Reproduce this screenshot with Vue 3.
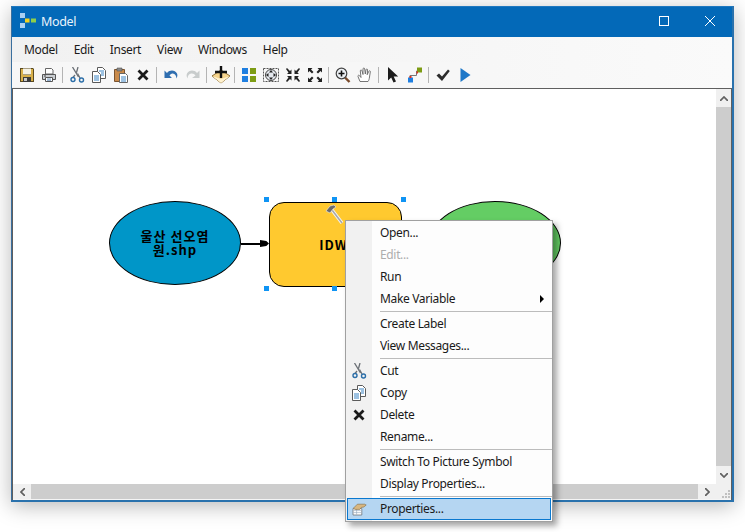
<script setup>
const menus = ['Model', 'Edit', 'Insert', 'View', 'Windows', 'Help']
const toolbar = [
  ['save', 'print'],
  ['cut', 'copy', 'paste', 'del'],
  ['undo', 'redo'],
  ['add'],
  ['grid', 'extent', 'zin', 'zout'],
  ['mag', 'hand'],
  ['pointer', 'connect'],
  ['check', 'run']
]
const contextMenu = [
  [{ t: 'Open...' }, { t: 'Edit...', off: true }, { t: 'Run' }, { t: 'Make Variable', sub: true }],
  [{ t: 'Create Label' }, { t: 'View Messages...' }],
  [{ t: 'Cut', i: 'cut' }, { t: 'Copy', i: 'copy' }, { t: 'Delete', i: 'del' }, { t: 'Rename...' }],
  [{ t: 'Switch To Picture Symbol' }, { t: 'Display Properties...' }],
  [{ t: 'Properties...', i: 'props', on: true }]
]
const handles = [
  [251, 108], [319, 108], [388, 108], [251, 197], [319, 197]
]
</script>

<template>
  <div class="page">
    <svg class="defs" width="0" height="0">
      <symbol id="save" viewBox="0 0 16 16"><path d="M1 1h13l1 1v13H1z" fill="#5a4a20"/><path d="M4 1.5h8v6H4z" fill="#f4f1e4"/><path d="M3 2h1v6h8V2h2v12H2V2z" fill="#d8b04a"/><path d="M4 10h8v5H4z" fill="#3b3b3b"/><path d="M5 11h3v3H5z" fill="#c9c9c9"/></symbol>
      <symbol id="print" viewBox="0 0 16 16"><path d="M4.500 1.500h6l1.500 1.500v4H4.500z" fill="#fff" stroke="#666"/><path d="M1.500 7.500h13v5h-13z" fill="#c9cdd1" stroke="#555"/><path d="M4.500 10.500h7v4h-7z" fill="#fff" stroke="#555"/><path d="M6 12h4M6 13.300h4" stroke="#7a9cc0"/><path d="M3 9h2" stroke="#444"/></symbol>
      <symbol id="cut" viewBox="0 0 16 16"><path d="M3.500 0l6 10M9 0L7.500 5.500M6 8l-2 2.500" stroke="#6a6f75" stroke-width="1.300" fill="none"/><path d="M8.500 6.500L11 11" stroke="#6a6f75" stroke-width="1.300"/><circle cx="4" cy="12.500" r="2" fill="none" stroke="#2b6ea8" stroke-width="1.400"/><circle cx="12.500" cy="13" r="2" fill="none" stroke="#2b6ea8" stroke-width="1.400"/></symbol>
      <symbol id="copy" viewBox="0 0 16 16"><path d="M6.500.5h5l3 3v8h-8z" fill="#fff" stroke="#5a5a5a"/><path d="M1.500 4.500h5l3 3v8h-8z" fill="#fff" stroke="#5a5a5a"/><path d="M3 9h5M3 11h5M3 13h5M8 4h5M10 6h3M10 8h3" stroke="#3a84c4"/></symbol>
      <symbol id="paste" viewBox="0 0 16 16"><path d="M1.500 2.500h10v12h-10z" fill="#c98a4a" stroke="#7a5430"/><path d="M4 1h5v3H4z" fill="#8a8a8a" stroke="#555" stroke-width=".6"/><path d="M6.500 6.500h6l2 2v7h-8z" fill="#fff" stroke="#666"/><path d="M8 10h5M8 12h5M8 14h5" stroke="#3a84c4"/></symbol>
      <symbol id="del" viewBox="0 0 16 16"><path d="M3.500 3.500l9 9M12.500 3.500l-9 9" stroke="#1a1a1a" stroke-width="2.800"/></symbol>
      <symbol id="undo" viewBox="0 0 16 16"><path d="M4 7c3-3.500 8-3 10 .5 .7 1.500 .5 3-.5 5-.2-3-1.500-4.800-3.700-5C8.800 7.300 7.500 8 6.500 9.500L9 12H1.500V4.500z" transform="translate(0 -1)" fill="#2f6eb0"/></symbol>
      <symbol id="redo" viewBox="0 0 16 16"><path d="M12 7c-3-3.500-8-3-10 .5-.7 1.500-.5 3 .5 5 .2-3 1.500-4.800 3.700-5 2-.2 3.300.5 4.300 2L7 12h7.500V4.500z" transform="translate(0 -1)" fill="#c8cccc"/></symbol>
      <symbol id="add" viewBox="0 0 20 20"><path d="M1 11l9-6 9 6-9 7z" fill="#f6d48c" stroke="#8a6a30"/><path d="M1 11l9 7 9-7-9 3z" fill="#fff2cf"/><path d="M10 1v12M4 7h12" stroke="#111" stroke-width="2.400"/></symbol>
      <symbol id="grid" viewBox="0 0 16 16"><path d="M1 1h6v6H1zM1 9h6v6H1z" fill="#1f7fe0"/><path d="M9 1h6v6H9zM9 9h6v6H9z" fill="#7d9c14"/></symbol>
      <symbol id="extent" viewBox="0 0 16 16"><rect x=".500" y="1.500" width="15" height="13" fill="none" stroke="#555" stroke-dasharray="2 1"/><circle cx="8" cy="8" r="5.500" fill="#e4e8ee" stroke="#444"/><path d="M8 3l2 2.500H6zM8 13l-2-2.500h4zM3 8l2.500-2v4zM13 8l-2.500 2V6z" fill="#222"/></symbol>
      <symbol id="zin" viewBox="0 0 16 16"><path d="M1 2l1-1 3 3 1.500-1.500V7H2l1.500-1.500zM15 2l-1-1-3 3-1.500-1.500V7H14l-1.500-1.500zM1 14l1 1 3-3 1.500 1.500V9H2l1.500 1.500zM15 14l-1 1-3-3-1.500 1.500V9H14l-1.500 1.500z" fill="#222"/></symbol>
      <symbol id="zout" viewBox="0 0 16 16"><path d="M1 1h4.500L4 2.500l2.500 2.500-1.500 1.500L2.500 4 1 5.500zM15 1h-4.500L12 2.500 9.500 5 11 6.500 13.500 4 15 5.500zM1 15h4.500L4 13.500 6.500 11 5 9.500 2.500 12 1 10.500zM15 15h-4.500l1.500-1.500L9.500 11 11 9.500l2.500 2.500 1.500-1.500z" fill="#222"/></symbol>
      <symbol id="mag" viewBox="0 0 16 16"><path d="M10 10.500l4.500 4.500" stroke="#7a4a2a" stroke-width="2.400"/><circle cx="6.500" cy="6.500" r="5.300" fill="#eef2f6" stroke="#444" stroke-width="1.200"/><path d="M6.500 3.500v6M3.500 6.500h6" stroke="#111" stroke-width="1.600"/></symbol>
      <symbol id="hand" viewBox="0 0 16 16"><path d="M3 14.500L1 9.500c-.4-1.300 1-1.700 1.600-.8L4 10.500 3.300 4c-.1-1.300 1.400-1.400 1.700-.2L6 7.500 6 2c0-1.300 1.600-1.300 1.700 0L8.300 7 9 2.800c.2-1.200 1.700-1 1.600.2L10.200 7.700 11.800 4.300c.5-1 1.800-.5 1.500.5L12.500 10c-.2 2-.7 3.500-1.500 4.500z" fill="#fff" stroke="#666" stroke-width=".9"/></symbol>
      <symbol id="pointer" viewBox="0 0 16 16"><path d="M3 0v13.500l3.200-3 2.300 5 2.500-1.100-2.300-4.900h4.500z" fill="#1c1c1c"/></symbol>
      <symbol id="connect" viewBox="0 0 16 16"><path d="M3 12V8.500h6.500V4H12" fill="none" stroke="#777"/><path d="M1 10.500h5V15.500H1z" fill="#1f7fe0"/><path d="M2.500 9h2v2h-2z" fill="#e03020"/><path d="M10 .5h5v5h-5z" fill="#7d9c14"/><path d="M9.500 4.500h1.500v2H9.500z" fill="#e03020"/></symbol>
      <symbol id="check" viewBox="0 0 16 16"><path d="M1.500 8.500l2.500-2 3 3 6-7 1.800 1.500-7.800 10z" fill="#2c2c2c"/></symbol>
      <symbol id="run" viewBox="0 0 16 16"><path d="M3.500 1l10 7-10 7z" fill="#1f78c8"/></symbol>
      <symbol id="props" viewBox="0 0 20 20"><path d="M2.500 9.500h11v8h-11z" fill="#fff" stroke="#6f7478"/><path d="M3 12h10M3 14.500h10M7 10v7" stroke="#9ab" stroke-width=".8"/><path d="M3 9l5-5h9l2 1-3 2.500-3 .5-2 2.500H5z" fill="#d9b780" stroke="#7d6238" stroke-width=".7"/></symbol>
      <symbol id="logo" viewBox="0 0 16 16"><path d="M0 0h5v5H0zM0 10h5v5H0z" fill="#a9d0f2"/><path d="M5 5.500h4.500v4H5z" fill="#f4d21f"/><path d="M11 5.500h5v4h-5z" fill="#8fce4a"/></symbol>
    </svg>

    <div class="window">
      <header class="titlebar">
        <svg class="logo"><use href="#logo" /></svg>
        <span class="title">Model</span>
        <div class="controls">
          <svg class="ctl" viewBox="0 0 10 10"><rect x=".5" y=".5" width="9" height="9" fill="none" stroke="#fff" /></svg>
          <svg class="ctl" viewBox="0 0 10 10"><path d="M0 0l10 10M10 0L0 10" stroke="#fff" /></svg>
        </div>
      </header>

      <nav class="menubar">
        <span v-for="m in menus" :key="m">{{ m }}</span>
      </nav>

      <div class="toolbar-row">
        <div class="toolbar">
          <template v-for="(group, g) in toolbar" :key="g">
            <i v-if="g" class="tool-sep"></i>
            <span v-for="ic in group" :key="ic" class="tool">
              <svg :class="ic === 'add' ? 'ic-lg' : 'ic'"><use :href="'#' + ic" /></svg>
            </span>
          </template>
        </div>
      </div>

      <div class="workspace">
        <div class="canvas">
          <div class="node ellipse blue">
            <span>울산 선오염<br />원.shp</span>
          </div>
          <div class="arrow"></div>
          <div class="node tool-node"><span>IDW</span></div>
          <div class="node ellipse green"></div>
          <svg class="hammer" viewBox="0 0 20 22">
            <path d="M7 7l10 13" stroke="#f4f4f4" stroke-width="3.500" />
            <path d="M7 7l10 13" stroke="#a8a8a8" stroke-width="1.500" />
            <path d="M1 8l4-5 4-1 2 2-3 2-3 4z" fill="#6a6a6a" stroke="#eee" stroke-width=".6" />
          </svg>
          <i v-for="(h, n) in handles" :key="n" class="handle" :style="{ left: h[0] + 'px', top: h[1] + 'px' }"></i>
        </div>
        <div class="vscroll">
          <div class="sbtn"><svg viewBox="0 0 8 5"><path d="M0 5l4-4 4 4" fill="none" stroke="#606060" stroke-width="1.700" /></svg></div>
          <div class="thumb"></div>
          <div class="sbtn"><svg viewBox="0 0 8 5"><path d="M0 0l4 4 4-4" fill="none" stroke="#606060" stroke-width="1.700" /></svg></div>
        </div>
        <div class="hscroll">
          <div class="sbtn"><svg class="side" viewBox="0 0 5 8"><path d="M5 0L1 4l4 4" fill="none" stroke="#606060" stroke-width="1.700" /></svg></div>
          <div class="thumb"></div>
          <div class="sbtn"><svg class="side" viewBox="0 0 5 8"><path d="M0 0l4 4-4 4" fill="none" stroke="#606060" stroke-width="1.700" /></svg></div>
        </div>
        <div class="corner">
          <svg viewBox="0 0 9 9"><path d="M7 1h2v2H7zM4 4h2v2H4zM7 4h2v2H7zM1 7h2v2H1zM4 7h2v2H4zM7 7h2v2H7z" fill="#c0c0c0" /></svg>
        </div>
      </div>
    </div>

    <div class="context">
      <template v-for="(sect, s) in contextMenu" :key="s">
        <i v-if="s" class="ctx-sep"></i>
        <div v-for="item in sect" :key="item.t" class="ctx-item" :class="{ off: item.off, on: item.on }">
          <span class="ctx-icon"><svg v-if="item.i"><use :href="'#' + item.i" /></svg></span>
          <span class="ctx-label">{{ item.t }}</span>
          <b v-if="item.sub" class="ctx-sub"></b>
        </div>
      </template>
    </div>
  </div>
</template>

<style scoped>
.page {
  position: relative;
  width: 745px;
  height: 532px;
  overflow: hidden;
  background: #fff;
  padding: 6px 0 0 11px;
  box-sizing: border-box;
  font-family: "Noto Sans", "Open Sans", sans-serif;
  font-size: 12px;
  letter-spacing: -0.34px;
  color: #1a1a1a;
}
.defs { position: absolute; }
.window {
  width: 723px;
  height: 496px;
  box-sizing: border-box;
  display: flex;
  flex-direction: column;
  border: 1px solid #0f6cb5;
  border-width: 1px 2px 2px 1px;
  border-color: #1e78c0 #2a72ad #2a72ad #3a6f9e;
  background: #f3f3f3;
  box-shadow: 0 4px 20px rgba(0, 0, 0, 0.28);
}
.titlebar {
  height: 30px;
  flex: none;
  box-sizing: border-box;
  display: flex;
  align-items: center;
  background: #0369b8;
  color: #fff;
  padding: 0 0 2px 8px;
}
.logo { width: 16px; height: 16px; margin-right: 5px; }
.title { font-size: 12.5px; color: #e9f3fb; }
.controls { margin-left: auto; display: flex; align-items: center; gap: 36px; padding-right: 17px; }
.ctl { width: 10px; height: 10px; display: block; }
.menubar {
  height: 25px;
  flex: none;
  display: flex;
  align-items: center;
  gap: 16px;
  padding-left: 12px;
  background: linear-gradient(90deg, #f1f1f1, #fafafa);
}
.toolbar-row {
  height: 26px;
  flex: none;
  background: linear-gradient(90deg, #f1f1f1, #fafafa);
}
.toolbar {
  display: flex;
  align-items: center;
  height: 25px;
  width: 463px;
  padding-left: 4px;
  background: #f7f7f7;
  border-radius: 0 5px 5px 0;
}
.tool {
  width: 22px;
  height: 22px;
  flex: none;
  display: flex;
  align-items: center;
  justify-content: center;
}
.ic { width: 16px; height: 16px; }
.ic-lg { width: 20px; height: 20px; }
.tool-sep { width: 1px; height: 16px; margin: 0 3px 0 2px; background: #b4b4b4; flex: none; }
.workspace {
  flex: 1;
  min-height: 0;
  display: grid;
  grid-template-columns: 1fr 15px;
  grid-template-rows: 1fr 15px;
  border-top: 1px solid #5f5f5f;
  border-left: 1px solid #5f5f5f;
  border-right: 1px solid #5f5f5f;
  padding-bottom: 1px;
  background: #f5f5f5;
}
.canvas {
  position: relative;
  background: #fff;
  overflow: hidden;
}
.node {
  position: absolute;
  box-sizing: border-box;
  border: 1px solid #000;
  display: flex;
  align-items: center;
  justify-content: center;
  text-align: center;
  font-family: "Noto Sans CJK KR", "DejaVu Sans", sans-serif;
  font-weight: 700;
  font-size: 13px;
  letter-spacing: 1px;
  line-height: 14px;
  color: #000;
}
.ellipse { width: 132px; height: 84px; border-radius: 50%; top: 112px; }
.blue { left: 96px; background: #0096c8; }
.green { left: 416px; background: #64cd64; }
.tool-node {
  left: 256px;
  top: 113px;
  width: 133px;
  height: 85px;
  border-radius: 15px;
  background: #ffc92f;
  padding-right: 4px;
}
.arrow {
  position: absolute;
  left: 228px;
  top: 154px;
  width: 19px;
  height: 2px;
  background: #000;
}
.arrow::after {
  content: "";
  position: absolute;
  right: -9px;
  top: -3px;
  width: 9px;
  height: 7px;
  background: #000;
  clip-path: polygon(0 0, 70% 15%, 100% 50%, 70% 85%, 0 100%);
}
.hammer { position: absolute; left: 312px; top: 114px; width: 20px; height: 22px; }
.handle { position: absolute; width: 5px; height: 5px; background: #0f94f4; }
.vscroll {
  grid-column: 2;
  grid-row: 1;
  display: flex;
  flex-direction: column;
  background: #f0f0f0;
}
.hscroll {
  grid-column: 1;
  grid-row: 2;
  display: flex;
  background: #f0f0f0;
}
.thumb { flex: 1; background: #cdcdcd; }
.sbtn {
  flex: none;
  display: flex;
  align-items: center;
  justify-content: center;
}
.vscroll .sbtn { width: 15px; height: 18px; }
.hscroll .sbtn { width: 18px; height: 15px; }
.sbtn svg { width: 8px; height: 5px; }
.sbtn .side { width: 5px; height: 8px; }
.corner {
  grid-column: 2;
  grid-row: 2;
  display: flex;
  align-items: flex-end;
  justify-content: flex-end;
  padding: 0 1px 1px 0;
  background: #f0f0f0;
}
.corner svg { width: 9px; height: 9px; }
.context {
  position: absolute;
  left: 345px;
  top: 220px;
  width: 208px;
  height: 302px;
  box-sizing: border-box;
  border: 1px solid #a0a0a0;
  padding-top: 1px;
  background: linear-gradient(90deg, #f1f1f1 26px, #fdfdfd 26px);
  box-shadow: 4px 4px 6px rgba(0, 0, 0, 0.35);
}
.ctx-item {
  height: 22px;
  display: flex;
  align-items: center;
  box-sizing: border-box;
}
.ctx-label { position: relative; top: -1px; }
.ctx-item.off { color: #adadad; }
.ctx-item.on {
  margin: 0 1px;
  background: #b5d6f2;
  outline: 1px solid #0a78cf;
  outline-offset: -1px;
}
.ctx-icon {
  width: 34px;
  flex: none;
  display: flex;
  justify-content: flex-start;
  padding-left: 5px;
  box-sizing: border-box;
}
.ctx-item.on .ctx-icon { width: 33px; padding-left: 4px; }
.ctx-icon svg { width: 16px; height: 16px; display: block; }
.ctx-sub {
  margin-left: auto;
  margin-right: 8px;
  border-left: 4px solid #000;
  border-top: 4px solid transparent;
  border-bottom: 4px solid transparent;
}
.ctx-sep {
  display: block;
  height: 1px;
  margin: 1px 0 1px 34px;
  background: #bcbcbc;
}
</style>
